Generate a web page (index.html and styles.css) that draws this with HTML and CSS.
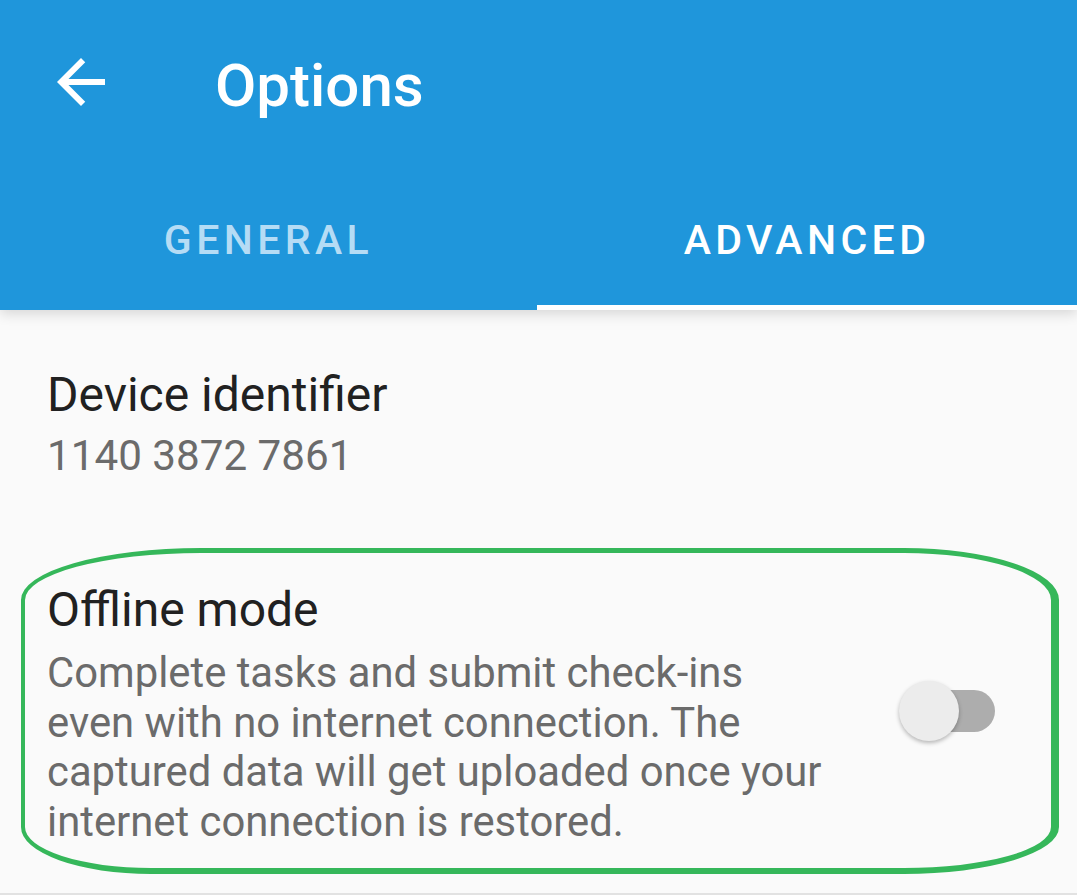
FILE: index.html
```html
<!DOCTYPE html>
<html>
<head>
<meta charset="utf-8">
<link rel="stylesheet" href="styles.css">
</head>
<body>
<div class="app">
  <header class="appbar">
    <div class="toolbar">
      <svg class="back" viewBox="0 0 24 24" width="72" height="72"><path fill="#fff" d="M20 11H7.83l5.59-5.59L12 4l-8 8 8 8 1.41-1.41L7.83 13H20v-2z"/></svg>
      <h1 class="title">Options</h1>
    </div>
    <nav class="tabs">
      <div class="tab">GENERAL</div>
      <div class="tab active">ADVANCED</div>
    </nav>
  </header>
  <main class="content">
    <section class="pref">
      <div class="pref-title">Device identifier</div>
      <div class="pref-summary">1140 3872 7861</div>
    </section>
    <section class="pref-switch">
      <div class="pref-text">
        <div class="pref-title">Offline mode</div>
        <div class="pref-summary desc">Complete tasks and submit check-ins even with no internet connection. The captured data will get uploaded once your internet connection is restored.</div>
      </div>
      <div class="switch"><span class="track"></span><span class="thumb"></span></div>
      <div class="highlight"></div>
    </section>
  </main>
</div>
</body>
</html>
```
FILE: styles.css
```css
* { box-sizing: border-box; }
html, body { margin: 0; padding: 0; }
body {
  background: #fafafa;
  font-family: Roboto, "Noto Sans", sans-serif;
  width: 1077px;
  height: 895px;
  overflow: hidden;
}
.app { position: relative; height: 895px; }
.appbar {
  background: #1f96db;
  position: relative;
  box-shadow: 0 4px 12px rgba(0,0,0,0.14);
  z-index: 1;
}
.toolbar {
  height: 170px;
  display: flex;
  align-items: center;
  padding-left: 45px;
}
.back { display: block; margin-top: -6px; }
.title {
  margin: 2px 0 0 98px;
  color: #fff;
  font-weight: 500;
  font-size: 60px;
  line-height: 1;
}
.tabs { display: flex; height: 140px; }
.tab {
  flex: 0 0 537px;
  display: flex;
  align-items: center;
  justify-content: center;
  color: #b5dcf5;
  font-weight: 500;
  font-size: 41px;
  letter-spacing: 4.4px;
  padding-top: 6px;
  padding-bottom: 6px;
}
.tab.active {
  flex: 1;
  color: #fff;
  border-bottom: 5px solid #fff;
  padding-bottom: 1px;
}
.content { padding: 0 0 0 47px; }
.pref { padding-top: 55px; }
.pref-title {
  color: #212121;
  font-size: 48px;
  line-height: 60px;
}
.pref-summary {
  color: #6b6b6b;
  font-size: 42.2px;
  line-height: 61px;
}
.pref-switch {
  position: relative;
  display: flex;
  margin-top: 62px;
  height: 326px;
  padding-top: 34px;
}
.pref-text { width: 790px; }
.pref-switch .pref-title { line-height: 56px; }
.desc { line-height: 49.5px; margin-top: 10px; font-size: 41.8px; }
.switch {
  position: relative;
  align-self: center;
  width: 100px;
  height: 61px;
  margin-left: 62px;
  margin-top: -34px;
}
.track {
  position: absolute;
  left: 16px; top: 9px;
  width: 80px; height: 42px;
  border-radius: 21px;
  background: #adadad;
}
.thumb {
  position: absolute;
  left: 0; top: 0;
  width: 60px; height: 60px;
  border-radius: 50%;
  background: #ececec;
  box-shadow: 0 2px 4px rgba(0,0,0,0.28);
}
.highlight {
  position: absolute;
  left: -26px;
  right: 18px;
  top: 0;
  bottom: 0;
  border-style: solid;
  border-color: #35b75a;
  border-width: 5px 8px 6px 4px;
  border-radius: 180px 155px 155px 130px / 52px 52px 47px 47px;
  pointer-events: none;
}
.app::after {
  content: "";
  position: absolute;
  left: 0; right: 0; bottom: 0;
  height: 2px;
  background: #e2e2e2;
}
```
